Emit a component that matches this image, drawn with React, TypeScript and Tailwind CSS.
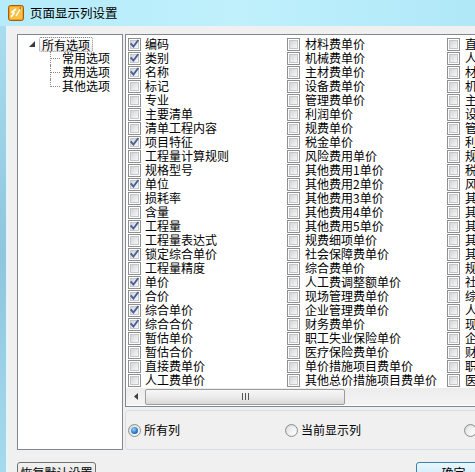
import React from 'react';

const font = "font-['Noto_Sans_CJK_SC',sans-serif]";

const col1: [string, boolean][] = [
    ['编码', true], ['类别', true], ['名称', true], ['标记', false], ['专业', false],
    ['主要清单', false], ['清单工程内容', false], ['项目特征', true], ['工程量计算规则', false], ['规格型号', false],
    ['单位', true], ['损耗率', false], ['含量', false], ['工程量', true], ['工程量表达式', false],
    ['锁定综合单价', true], ['工程量精度', false], ['单价', true], ['合价', true], ['综合单价', true],
    ['综合合价', true], ['暂估单价', false], ['暂估合价', false], ['直接费单价', false], ['人工费单价', false]
];

const col2 = [
    '材料费单价', '机械费单价', '主材费单价', '设备费单价', '管理费单价', '利润单价', '规费单价', '税金单价',
    '风险费用单价', '其他费用1单价', '其他费用2单价', '其他费用3单价', '其他费用4单价', '其他费用5单价',
    '规费细项单价', '社会保障费单价', '综合费单价', '人工费调整额单价', '现场管理费单价', '企业管理费单价',
    '财务费单价', '职工失业保险单价', '医疗保险费单价', '单价措施项目费单价', '其他总价措施项目费单价'
];

const col3 = [
    '直接费合价', '人工费合价', '材料费合价', '机械费合价', '主材费合价', '设备费合价', '管理费合价', '利润合价',
    '规费合价', '税金合价', '风险费用合价', '其他费用1合价', '其他费用2合价', '其他费用3合价', '其他费用4合价',
    '其他费用5合价', '规费细项合价', '社会保障费合价', '综合费合价', '人工费调整额合价', '现场管理费合价',
    '企业管理费合价', '财务费合价', '职工失业保险合价', '医疗保险费合价'
];

const CheckBox = ({ on }: { on: boolean }) => (
    <span className="relative block w-[13px] h-[13px] shrink-0 border border-[#8e8f8f] bg-white p-px">
        <span className="block w-full h-full border border-[#c4c6c9] bg-linear-to-br from-[#d2d4d7] to-[#f8f8f8]" />
        {on && (
            <svg className="absolute left-0 top-0" width="11" height="11" viewBox="0 0 11 11">
                <path d="M2.3 5.2 L4.4 7.6 L8.8 1.8" fill="none" stroke="#4a5f9a" strokeWidth="1.9" strokeLinecap="square" />
            </svg>
        )}
    </span>
);

const Radio = ({ on }: { on: boolean }) => (
    <span className="relative flex items-center justify-center w-[13px] h-[13px] shrink-0 rounded-full border border-[#8e8f8f] bg-linear-to-br from-[#d0d2d5] to-[#fafafa]">
        <span className="w-[9px] h-[9px] rounded-full bg-linear-to-br from-[#e2e3e5] to-white flex items-center justify-center">
            {on && <span className="w-[7px] h-[7px] rounded-full bg-[radial-gradient(circle_at_40%_35%,#8fd3ff,#1d63b8_70%,#174a8a)]" />}
        </span>
    </span>
);

const TreeChild = ({ label, last }: { label: string; last?: boolean }) => (
    <div className="flex h-[14px] items-center">
        <div className="relative w-[10px] h-full ml-[32px]">
            <span className={'absolute left-0 top-0 border-l border-dotted border-[#8a8a8a] ' + (last ? 'h-[8px]' : 'h-full')} />
            <span className="absolute left-0 top-[7px] w-full border-t border-dotted border-[#8a8a8a]" />
        </div>
        <span className="ml-[2px] leading-[14px]">{label}</span>
    </div>
);

const App = () => {
    return (
        <div className={'relative w-[475px] h-[472px] overflow-hidden flex flex-col bg-linear-to-b from-[#b9eefb] to-[#a5dcef] text-[12px] text-black ' + font}>
            {/* title bar */}
            <div className="h-[26px] shrink-0 flex items-center pl-[8px] bg-linear-to-r from-[#b5ebfa] via-[#bff0fc] to-[#b0e8f8]">
                <svg width="16" height="16" viewBox="0 0 16 16">
                    <rect x="0.5" y="0.5" width="15" height="15" rx="2" fill="#f3a11f" stroke="#a95a0b" />
                    <rect x="2" y="2" width="12" height="12" rx="1" fill="#f9c247" />
                    <path d="M3 12 L6 8 L4 7 L8 4" fill="none" stroke="#fff" strokeWidth="1.6" />
                    <path d="M8 11 L13 3" stroke="#fff" strokeWidth="1.4" />
                    <path d="M11 3 L13 2 L13 5" fill="#d0611a" />
                </svg>
                <span className="ml-[6px] text-[12.5px] leading-none">页面显示列设置</span>
            </div>

            <div className="flex-1 flex">
                <div className="w-[6px] shrink-0 bg-linear-to-b from-[#a9dcef] via-[#8fc6dd] to-[#a7dbef]" />
                <div className="w-[2px] shrink-0 bg-[#e4f6fc]" />
                {/* client area */}
                <div className="flex-1 bg-[#f0f0f0] pl-[9px] pt-[8px] flex flex-col">
                    <div className="flex gap-[2px] h-[416px]">
                        {/* tree */}
                        <div className="w-[106px] shrink-0 border border-[#828790] bg-white pt-[2px]">
                            <div className="flex h-[14px] items-center">
                                <svg className="ml-[11px]" width="6" height="6" viewBox="0 0 6 6">
                                    <polygon points="6,0 6,6 0,6" fill="#3c3c3c" />
                                </svg>
                                <span className="ml-[4px] h-[15px] px-[2px] rounded-[2px] border border-dotted border-[#8a8a8a] bg-linear-to-b from-white to-[#ececec] leading-[13px]">
                                    所有选项
                                </span>
                            </div>
                            <TreeChild label="常用选项" />
                            <TreeChild label="费用选项" />
                            <TreeChild label="其他选项" last />
                        </div>

                        {/* right column */}
                        <div className="w-[560px] shrink-0 flex flex-col">
                            <div className="h-[373px] shrink-0 border border-[#828790] bg-white flex flex-col">
                                <div className="flex pt-[2px] pl-[2px] h-[353px]">
                                    <div className="w-[159px] shrink-0">
                                        {col1.map(([t, on]) => (
                                            <div key={t} className="h-[14px] flex items-center gap-[4px]">
                                                <CheckBox on={on} />
                                                <span className="leading-[14px] whitespace-nowrap">{t}</span>
                                            </div>
                                        ))}
                                    </div>
                                    <div className="w-[160px] shrink-0">
                                        {col2.map(t => (
                                            <div key={t} className="h-[14px] flex items-center gap-[5px]">
                                                <CheckBox on={false} />
                                                <span className="leading-[14px] whitespace-nowrap">{t}</span>
                                            </div>
                                        ))}
                                    </div>
                                    <div className="w-[160px] shrink-0">
                                        {col3.map(t => (
                                            <div key={t} className="h-[14px] flex items-center gap-[5px]">
                                                <CheckBox on={false} />
                                                <span className="leading-[14px] whitespace-nowrap">{t}</span>
                                            </div>
                                        ))}
                                    </div>
                                </div>
                                {/* horizontal scrollbar */}
                                <div className="h-[17px] flex items-center bg-linear-to-b from-[#ececec] to-[#f4f4f4]">
                                    <div className="w-[19px] h-full flex items-center justify-center">
                                        <svg width="4" height="7" viewBox="0 0 4 7">
                                            <polygon points="4,0 4,7 0,3.5" fill="#404040" />
                                        </svg>
                                    </div>
                                    <div className="w-[200px] h-[16px] rounded-[2px] border border-[#9c9c9c] bg-linear-to-b from-[#f7f7f7] via-[#ebebeb] to-[#d9d9d9] flex items-center justify-center gap-[2px]">
                                        <span className="w-px h-[7px] bg-[#555]" />
                                        <span className="w-px h-[7px] bg-[#555]" />
                                        <span className="w-px h-[7px] bg-[#555]" />
                                    </div>
                                </div>
                            </div>

                            <div className="mt-[3px] h-[40px] rounded-[3px] border border-[#d5dfe5] flex items-center pl-[2px]">
                                <div className="w-[157px] shrink-0 flex items-center gap-[3px]">
                                    <Radio on={true} />
                                    <span>所有列</span>
                                </div>
                                <div className="w-[179px] shrink-0 flex items-center gap-[3px]">
                                    <Radio on={false} />
                                    <span>当前显示列</span>
                                </div>
                                <div className="flex items-center gap-[3px]">
                                    <Radio on={false} />
                                    <span>已隐藏列</span>
                                </div>
                            </div>
                        </div>
                    </div>

                    {/* bottom buttons */}
                    <div className="flex mt-[12px]">
                        <div className="w-[79px] h-[23px] shrink-0 rounded-[3px] border border-[#707070] bg-linear-to-b from-[#f2f2f2] to-[#dcdcdc] flex justify-center pt-[3px] leading-[14px]">
                            恢复默认设置
                        </div>
                        <div className="ml-[320px] w-[75px] h-[23px] shrink-0 rounded-[3px] border border-[#3c7fb1] bg-linear-to-b from-[#eaf6fd] to-[#bee6fd] flex justify-center pt-[3px] leading-[14px]">
                            确定
                        </div>
                    </div>
                </div>
            </div>
        </div>
    );
};

export default App;
